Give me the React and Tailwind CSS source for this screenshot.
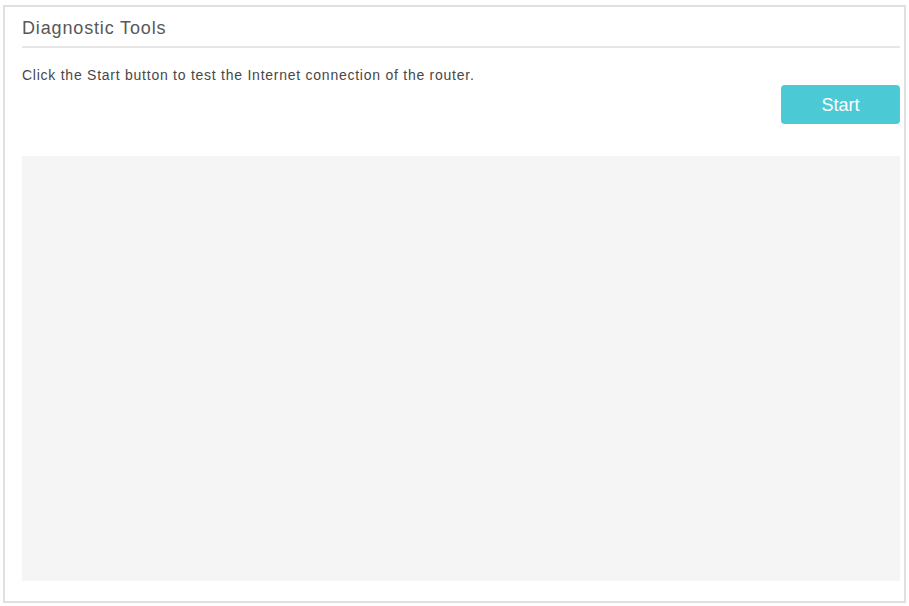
import React from 'react';

export default function App() {
  return (
    <div className="w-[909px] h-[606px] bg-white pt-[5px] pl-[3px] pr-[3px] pb-[3px]" style={{ fontFamily: '"Liberation Sans", Arial, sans-serif' }}>
      <div className="h-full border-2 border-[#e0e0e0] bg-white pl-[17px] pr-[4px] flex flex-col">
        <div className="pt-[12px] pb-[9px] border-b-2 border-[#e6e6e6]">
          <h2 className="text-[18px] leading-[18px] tracking-[0.85px] text-[#585858]">Diagnostic Tools</h2>
        </div>
        <p className="mt-[20px] text-[14px] leading-[15px] tracking-[0.75px] text-[#474747]">
          Click the Start button to test the Internet connection of the router.
        </p>
        <div className="flex justify-end mt-[2px]">
          <button className="w-[119px] h-[39px] rounded-[4px] bg-[#4bc9d5] text-white text-[18px] leading-none">Start</button>
        </div>
        <div className="mt-[32px] h-[425px] bg-[#f5f5f5]" />
      </div>
    </div>
  );
}
